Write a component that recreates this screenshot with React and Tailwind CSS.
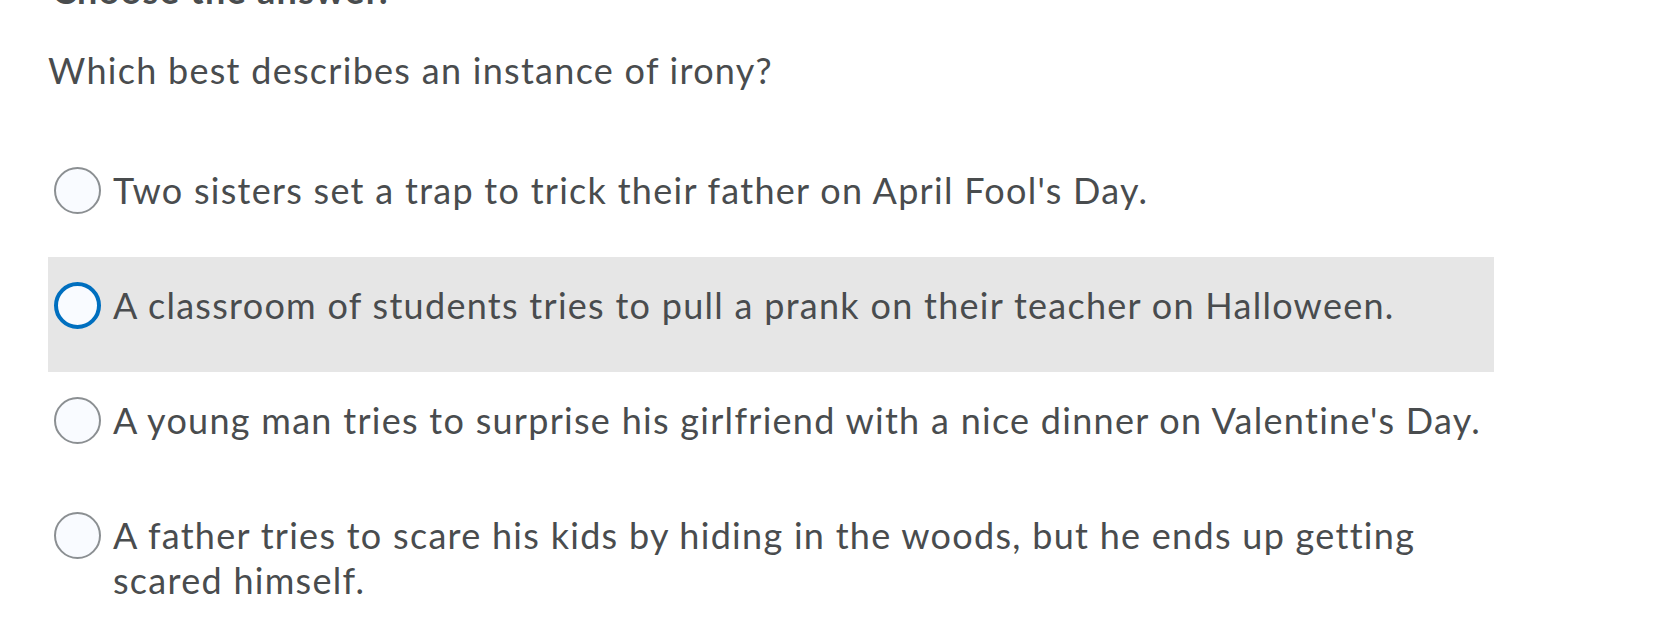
import React, { useState } from 'react';

const options = [
  "Two sisters set a trap to trick their father on April Fool's Day.",
  'A classroom of students tries to pull a prank on their teacher on Halloween.',
  "A young man tries to surprise his girlfriend with a nice dinner on Valentine's Day.",
  'A father tries to scare his kids by hiding in the woods, but he ends up getting scared himself.',
];

const App = () => {
  const [hovered] = useState(1);

  return (
    <div className="min-h-screen bg-white overflow-hidden pl-[48px] text-[#494c4e] text-[36px] leading-[45px] tracking-[1.28px] font-['Lato','Liberation_Sans',sans-serif]">
      {/* Heading, mostly scrolled out of view */}
      <h2 className="mt-[-32px] font-bold pl-[4px]">Choose the answer.</h2>

      <p className="mt-[35px]">Which best describes an instance of irony?</p>

      <div className="mt-[49px] w-[1446px]">
        {options.map((text, i) => (
          <label
            key={i}
            className={`flex items-start gap-[12px] pl-[6px] pr-[8px] pt-[26px] pb-[43px] ${
              i === hovered ? 'bg-[#e6e6e6]' : ''
            }`}
          >
            <span
              className={`mt-[-1px] shrink-0 w-[47px] h-[47px] rounded-full bg-[#f9fbff] ${
                i === hovered ? 'border-[4px] border-[#006fbf]' : 'border-[2px] border-[#8b8f92]'
              }`}
            ></span>
            <span>{text}</span>
          </label>
        ))}
      </div>
    </div>
  );
};

export default App;
